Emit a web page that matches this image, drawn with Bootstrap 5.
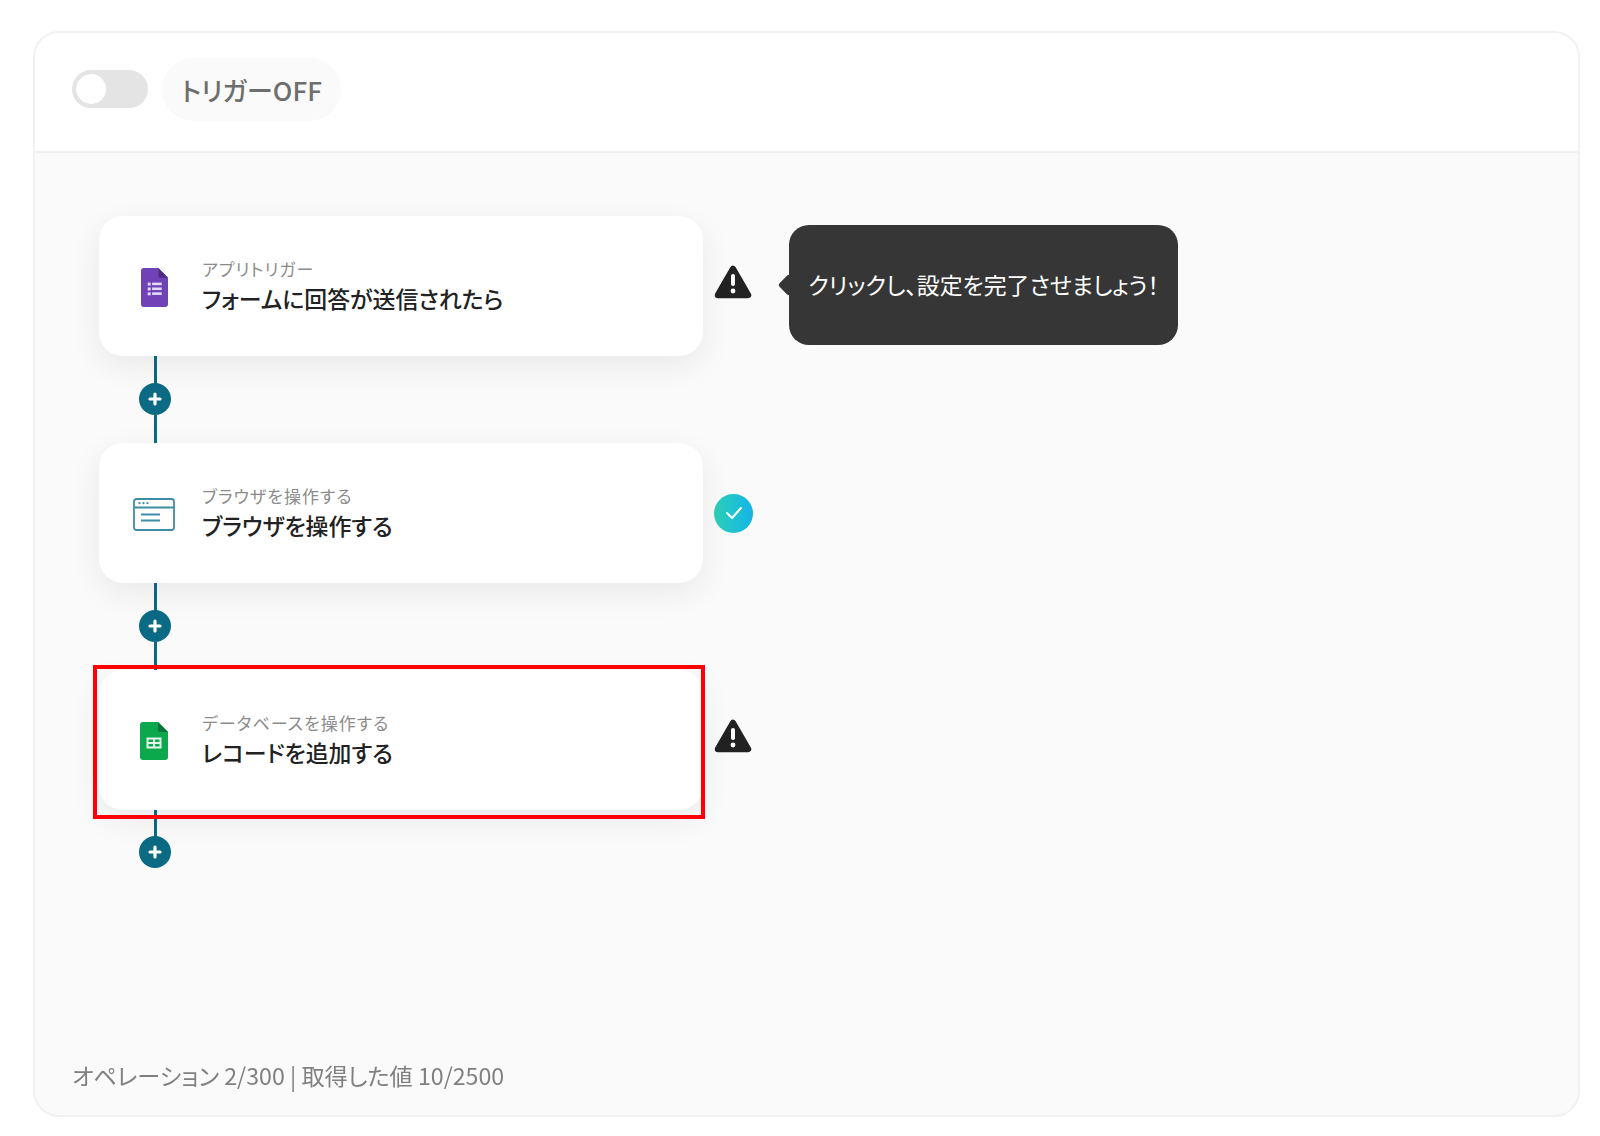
<!DOCTYPE html>
<html lang="ja">
<head>
<meta charset="utf-8">
<title>フロー</title>
<link href="https://cdn.jsdelivr.net/npm/bootstrap@5.3.0/dist/css/bootstrap.min.css" rel="stylesheet">
<style>
html,body{height:100%;}
body{background:#fff;font-family:"Noto Sans CJK JP","Noto Sans",sans-serif;overflow:hidden;}
.flow-panel{margin:31px 20px 20px 33px;height:1086px;border:2px solid #f1f1f1;border-radius:26px;overflow:hidden;background:#fafafa;filter:blur(.4px);}
.flow-head{height:120px;background:#fff;border-bottom:2px solid #f1f1f1;padding:0 0 6px 37px;gap:14px;}
.flow-head .form-check{margin:0;padding:0;min-height:0;line-height:0;}
.flow-head .form-check-input{float:none;margin:0;width:76px;height:38px;background-color:#e4e4e4;border:4px solid #e4e4e4;box-shadow:none;background-position:left center;background-size:30px 30px;
background-image:url("data:image/svg+xml,%3csvg xmlns='http://www.w3.org/2000/svg' viewBox='-4 -4 8 8'%3e%3ccircle r='4' fill='%23fff'/%3e%3c/svg%3e");}
.trigger-chip{height:63px;width:179px;background:#fafafa;border-radius:32px;color:#6e6e6e;font-size:26px;font-weight:500;font-feature-settings:"palt";justify-content:center;}
.flow-body{padding:63px 0 0 64px;}
.step-row{height:140px;}
.step-card{width:604px;height:140px;border:0;border-radius:24px;background:#fff;box-shadow:0 10px 32px rgba(0,0,0,.07);flex-direction:row;align-items:center;flex-shrink:0;}
.step-icon{width:103px;padding:2px 0 0 7px;flex-shrink:0;}
.step-label{font-size:17px;letter-spacing:1px;line-height:24px;color:#8c8c8c;font-feature-settings:"palt";}
.step-title{font-size:22.900px;line-height:34px;font-weight:500;color:#222;font-feature-settings:"palt";}
.step-status{width:38px;margin-left:11px;flex-shrink:0;line-height:0;}
.step-status.warned{margin-bottom:8px;}
.link-col{height:87px;width:32px;margin-left:40px;}
.link-col.short{height:58px;}
.link-line{width:3px;flex:1;background:#0b6a84;}
.link-dot{width:32px;height:32px;margin-top:-2px;border-radius:50%;background:#0b6a84;flex-shrink:0;}
.tip-box{margin-left:37px;width:389px;height:120px;margin-bottom:3px;background:#363636;border-radius:20px;color:#fff;font-size:22.900px;font-feature-settings:"palt";position:relative;flex-shrink:0;justify-content:center;}
.tip-box::before{content:"";position:absolute;left:-8px;top:50%;width:16px;height:16px;margin-top:-8px;background:#363636;transform:rotate(45deg);border-radius:3px;}
.step-row.marked{position:relative;}
.red-mark{position:absolute;left:-6px;top:-5px;width:612px;height:154px;border:4.500px solid #fe0000;pointer-events:none;}
.check-dot{width:39px;height:39px;border-radius:50%;background:linear-gradient(90deg,#2dd1b6,#13b4e8);}
.flow-foot{color:#808080;font-size:23.200px;font-feature-settings:"palt";padding:0 0 24px 37px;line-height:32px;}
</style>
</head>
<body>
<div class="flow-panel d-flex flex-column">
  <div class="flow-head d-flex align-items-center flex-shrink-0">
    <div class="form-check form-switch"><input class="form-check-input" type="checkbox" role="switch" aria-label="トリガー"></div>
    <div class="trigger-chip d-flex align-items-center">トリガーOFF</div>
  </div>
  <div class="flow-body flex-grow-1">
    <div class="step-row d-flex align-items-center">
      <div class="card step-card">
        <div class="step-icon d-flex justify-content-center">
          <svg width="27" height="39" viewBox="0 0 28 40" preserveAspectRatio="none"><path d="M3 0H18L28 10V37a3 3 0 0 1-3 3H3a3 3 0 0 1-3-3V3a3 3 0 0 1 3-3Z" fill="#6f42b8"/><path d="M18 0L28 10H20a2 2 0 0 1-2-2Z" fill="#4d2c86"/><g fill="#e6dcf5"><rect x="7" y="15" width="3" height="3"/><rect x="7" y="20" width="3" height="3"/><rect x="7" y="25" width="3" height="3"/><rect x="11.500" y="15" width="10" height="2.600"/><rect x="11.500" y="20" width="10" height="2.600"/><rect x="11.500" y="25" width="10" height="2.600"/></g></svg>
        </div>
        <div>
          <div class="step-label">アプリトリガー</div>
          <div class="step-title">フォームに回答が送信されたら</div>
        </div>
      </div>
      <div class="step-status warned">
        <svg width="38" height="34" viewBox="0 0 38 34"><path d="M19 4L34 30H4Z" fill="#222" stroke="#222" stroke-width="6.500" stroke-linejoin="round"/><rect x="17" y="9" width="4" height="12" rx="2" fill="#fff"/><circle cx="19" cy="26" r="2.400" fill="#fff"/></svg>
      </div>
      <div class="tip-box d-flex align-items-center">クリックし、設定を完了させましょう！</div>
    </div>
    <div class="link-col d-flex flex-column align-items-center">
      <div class="link-line"></div>
      <div class="link-dot d-flex align-items-center justify-content-center"><svg width="14" height="14" viewBox="0 0 14 14"><path d="M7 2V12M2 7H12" stroke="#fff" stroke-width="3.200" stroke-linecap="round"/></svg></div>
      <div class="link-line"></div>
    </div>
    <div class="step-row d-flex align-items-center">
      <div class="card step-card">
        <div class="step-icon d-flex justify-content-center">
          <svg width="42" height="33" viewBox="0 0 42 33" fill="none" stroke="#3d8ea5" stroke-width="1.800"><rect x="1" y="1" width="40" height="31" rx="2.500"/><path d="M1 9.500H41"/><path d="M8 16.500H27M8 22.500H27"/><g fill="#3d8ea5" stroke="none"><circle cx="6.500" cy="5.200" r="1.100"/><circle cx="10.500" cy="5.200" r="1.100"/><circle cx="14.500" cy="5.200" r="1.100"/></g></svg>
        </div>
        <div>
          <div class="step-label">ブラウザを操作する</div>
          <div class="step-title">ブラウザを操作する</div>
        </div>
      </div>
      <div class="step-status">
        <div class="check-dot d-flex align-items-center justify-content-center"><svg width="20" height="16" viewBox="0 0 20 16" fill="none"><path d="M3 8L8 13L17 3" stroke="#fff" stroke-width="2" stroke-linecap="round" stroke-linejoin="round"/></svg></div>
      </div>
    </div>
    <div class="link-col d-flex flex-column align-items-center">
      <div class="link-line"></div>
      <div class="link-dot d-flex align-items-center justify-content-center"><svg width="14" height="14" viewBox="0 0 14 14"><path d="M7 2V12M2 7H12" stroke="#fff" stroke-width="3.200" stroke-linecap="round"/></svg></div>
      <div class="link-line"></div>
    </div>
    <div class="step-row marked d-flex align-items-center">
      <div class="card step-card">
        <div class="step-icon d-flex justify-content-center">
          <svg width="28" height="38" viewBox="0 0 28 38"><path d="M3 0H18L28 10V35a3 3 0 0 1-3 3H3a3 3 0 0 1-3-3V3a3 3 0 0 1 3-3Z" fill="#0ca84c"/><path d="M18 0L28 10H20a2 2 0 0 1-2-2Z" fill="#08753a"/><path d="M6.500 15.500H21.500V26.500H6.500Z M8.500 17.500V20H13V17.500Z M15 17.500V20H19.500V17.500Z M8.500 22V24.500H13V22Z M15 22V24.500H19.500V22Z" fill="#e4f5ea" fill-rule="evenodd"/></svg>
        </div>
        <div>
          <div class="step-label">データベースを操作する</div>
          <div class="step-title">レコードを追加する</div>
        </div>
      </div>
      <div class="step-status warned">
        <svg width="38" height="34" viewBox="0 0 38 34"><path d="M19 4L34 30H4Z" fill="#222" stroke="#222" stroke-width="6.500" stroke-linejoin="round"/><rect x="17" y="9" width="4" height="12" rx="2" fill="#fff"/><circle cx="19" cy="26" r="2.400" fill="#fff"/></svg>
      </div>
      <div class="red-mark"></div>
    </div>
    <div class="link-col short d-flex flex-column align-items-center">
      <div class="link-line"></div>
      <div class="link-dot d-flex align-items-center justify-content-center"><svg width="14" height="14" viewBox="0 0 14 14"><path d="M7 2V12M2 7H12" stroke="#fff" stroke-width="3.200" stroke-linecap="round"/></svg></div>
    </div>
  </div>
  <div class="flow-foot flex-shrink-0">オペレーション 2/300 | 取得した値 10/2500</div>
</div>
<script src="https://cdn.jsdelivr.net/npm/bootstrap@5.3.0/dist/js/bootstrap.bundle.min.js"></script>
</body>
</html>
